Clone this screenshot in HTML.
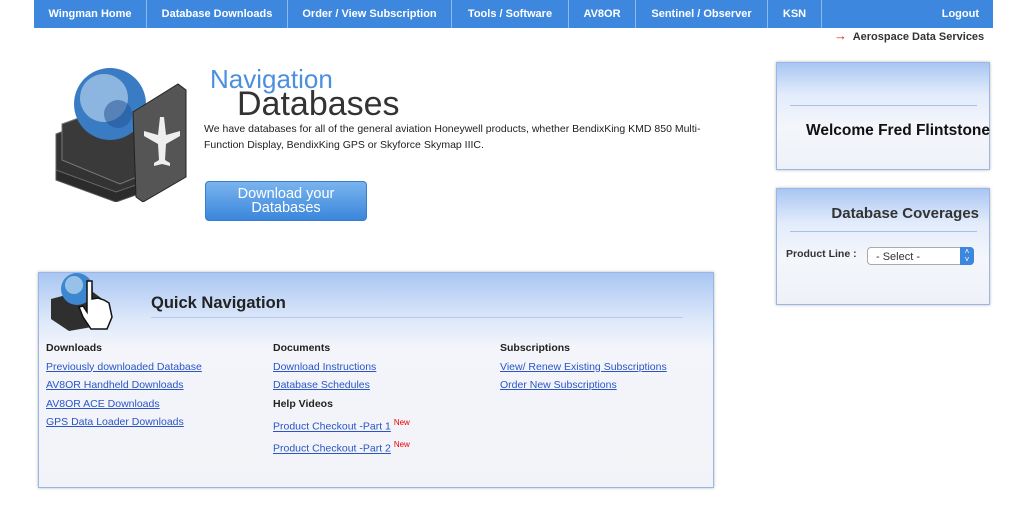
<!DOCTYPE html>
<html><head><style>
*{margin:0;padding:0;box-sizing:border-box}
body{width:1024px;height:529px;background:#fff;font-family:"Liberation Sans",Arial,sans-serif;position:relative;overflow:hidden}
.nav{position:absolute;left:34px;top:0;width:959px;height:28px;background:#3d88de;}
.nav div{position:absolute;top:0;height:28px;line-height:29px;color:#fff;font-weight:bold;font-size:11px;text-align:center;border-right:1px solid #8fb8ec}
.abs{position:absolute}
.panel{position:absolute;border:1px solid #9ab5e6;box-shadow:0 0 3px #bbb;background:linear-gradient(180deg,#a9c6f2 0%,#e3ecfb 30%,#f4f6fb 60%,#eef2f8 100%)}
a{color:#2a55c8;text-decoration:underline}
.ql{position:absolute;font-size:10.5px;line-height:18.5px}
.ql b{color:#222;font-size:10.5px}
sup{color:#e00;font-size:8px}
</style></head><body>
<div class="nav">
<div style="left:0;width:113px">Wingman Home</div>
<div style="left:113px;width:141px">Database Downloads</div>
<div style="left:254px;width:164px">Order / View Subscription</div>
<div style="left:418px;width:117px">Tools / Software</div>
<div style="left:535px;width:67px">AV8OR</div>
<div style="left:602px;width:132px">Sentinel / Observer</div>
<div style="left:734px;width:54px">KSN</div>
<div style="left:788px;width:171px;border:none;text-align:right;padding-right:14px">Logout</div>
</div>
<div class="abs" style="left:834px;top:28px;font-size:11px;font-weight:bold;color:#333"><span style="color:#d22;font-size:13px">→</span>&nbsp; Aerospace Data Services</div>

<svg class="abs" style="left:48px;top:62px" width="150" height="140">
<path d="M8 82 L70 58 L130 82 L130 118 L68 140 L8 118Z" fill="#2b2b2b" stroke="#555"/>
<path d="M8 72 L70 48 L130 72 L130 108 L68 130 L8 108Z" fill="#333" stroke="#666"/>
<path d="M14 62 L75 40 L130 62 L130 98 L72 122 L14 98Z" fill="#3a3a3a" stroke="#777"/>
<circle cx="62" cy="42" r="36" fill="#3a7cc4"/><circle cx="56" cy="36" r="24" fill="#cfe3f5" opacity=".55"/><circle cx="70" cy="52" r="14" fill="#1f4f90" opacity=".5"/>
<path d="M85 50 L130 22 L138 28 L138 115 L95 140 L88 135Z" fill="#555" stroke="#222"/>
<path d="M112 55 l4 0 l2 18 l14 -4 l0 5 l-14 8 l-1 16 l5 3 l0 3 l-8 -2 l-8 2 l0 -3 l5 -3 l-1 -16 l-14 -8 l0 -5 l14 4z" fill="#eee"/>
</svg>
<div class="abs" style="left:210px;top:64px;font-size:26px;color:#4b8fe0">Navigation</div>
<div class="abs" style="left:237px;top:85px;font-size:34px;color:#333">Databases</div>
<div class="abs" style="left:204px;top:122px;width:512px;font-size:10.5px;line-height:15.5px;color:#222">We have databases for all of the general aviation Honeywell products, whether BendixKing KMD 850 Multi-Function Display, BendixKing GPS or Skyforce Skymap IIIC.</div>
<div class="abs" style="left:205px;top:181px;width:162px;height:40px;border-radius:4px;background:linear-gradient(#7ab4ee,#3a86db);border:1px solid #3a7ccd;color:#fff;font-size:14.5px;text-align:center;line-height:14px;padding-top:5px">Download your<br>Databases</div>

<div class="panel" style="left:776px;top:62px;width:214px;height:108px">
<div class="abs" style="left:13px;top:42px;width:187px;border-top:1px solid #a9c0e8"></div>
<div class="abs" style="left:29px;top:59px;font-size:15.5px;font-weight:bold;color:#111;white-space:nowrap">Welcome Fred Flintstone</div>
</div>
<div class="panel" style="left:776px;top:188px;width:214px;height:117px">
<div class="abs" style="right:10px;top:16px;font-size:15px;font-weight:bold;color:#333">Database Coverages</div>
<div class="abs" style="left:13px;top:42px;width:187px;border-top:1px solid #a9c0e8"></div>
<div class="abs" style="left:9px;top:59px;font-size:10.5px;font-weight:bold;color:#333">Product Line :</div>
<div class="abs" style="left:90px;top:58px;width:107px;height:18px;border:1px solid #aaa;border-radius:4px;background:#fff;font-size:11px;color:#333;padding:3px 0 0 8px">- Select -
<div class="abs" style="right:-1px;top:-1px;width:14px;height:18px;background:#3d88de;border-radius:0 4px 4px 0;color:#fff;font-size:8px;text-align:center;line-height:8px;padding-top:1px">˄<br>˅</div></div>
</div>

<div class="panel" style="left:38px;top:272px;width:676px;height:216px;background:linear-gradient(180deg,#a9c6f2 0%,#dde8fa 22%,#f3f5fa 35%,#f1f3f8 100%)">
<svg class="abs" style="left:10px;top:-4px" width="75" height="62"><path d="M2 30 L40 20 L60 35 L60 55 L20 62 L2 50Z" fill="#2f2f2f"/><circle cx="28" cy="20" r="16" fill="#3c87d0"/><circle cx="25" cy="16" r="9" fill="#d6e8f7" opacity=".6"/><path d="M38 12 l5 0 l0 18 l6 -1 l6 2 l5 3 l3 14 l-5 12 l-16 0 l-8 -12 l-4 -10 l4 -1 l4 6 z" fill="#fff" stroke="#111" stroke-width="1.5"/></svg>
<div class="abs" style="left:112px;top:21px;font-size:16.5px;font-weight:bold;color:#222">Quick Navigation</div>
<div class="abs" style="left:112px;top:44px;width:532px;border-top:1px solid #b8cbea"></div>
<div class="ql" style="left:7px;top:66px"><b>Downloads</b><br><a>Previously downloaded Database</a><br><a>AV8OR Handheld Downloads</a><br><a>AV8OR ACE Downloads</a><br><a>GPS Data Loader Downloads</a></div>
<div class="ql" style="left:234px;top:66px"><b>Documents</b><br><a>Download Instructions</a><br><a>Database Schedules</a><br><b>Help Videos</b><br><div style="margin-top:1px"><a>Product Checkout -Part 1</a> <sup>New</sup></div><div><a>Product Checkout -Part 2</a> <sup>New</sup></div></div>
<div class="ql" style="left:461px;top:66px"><b>Subscriptions</b><br><a>View/ Renew Existing Subscriptions</a><br><a>Order New Subscriptions</a></div>
</div>
</body></html>
